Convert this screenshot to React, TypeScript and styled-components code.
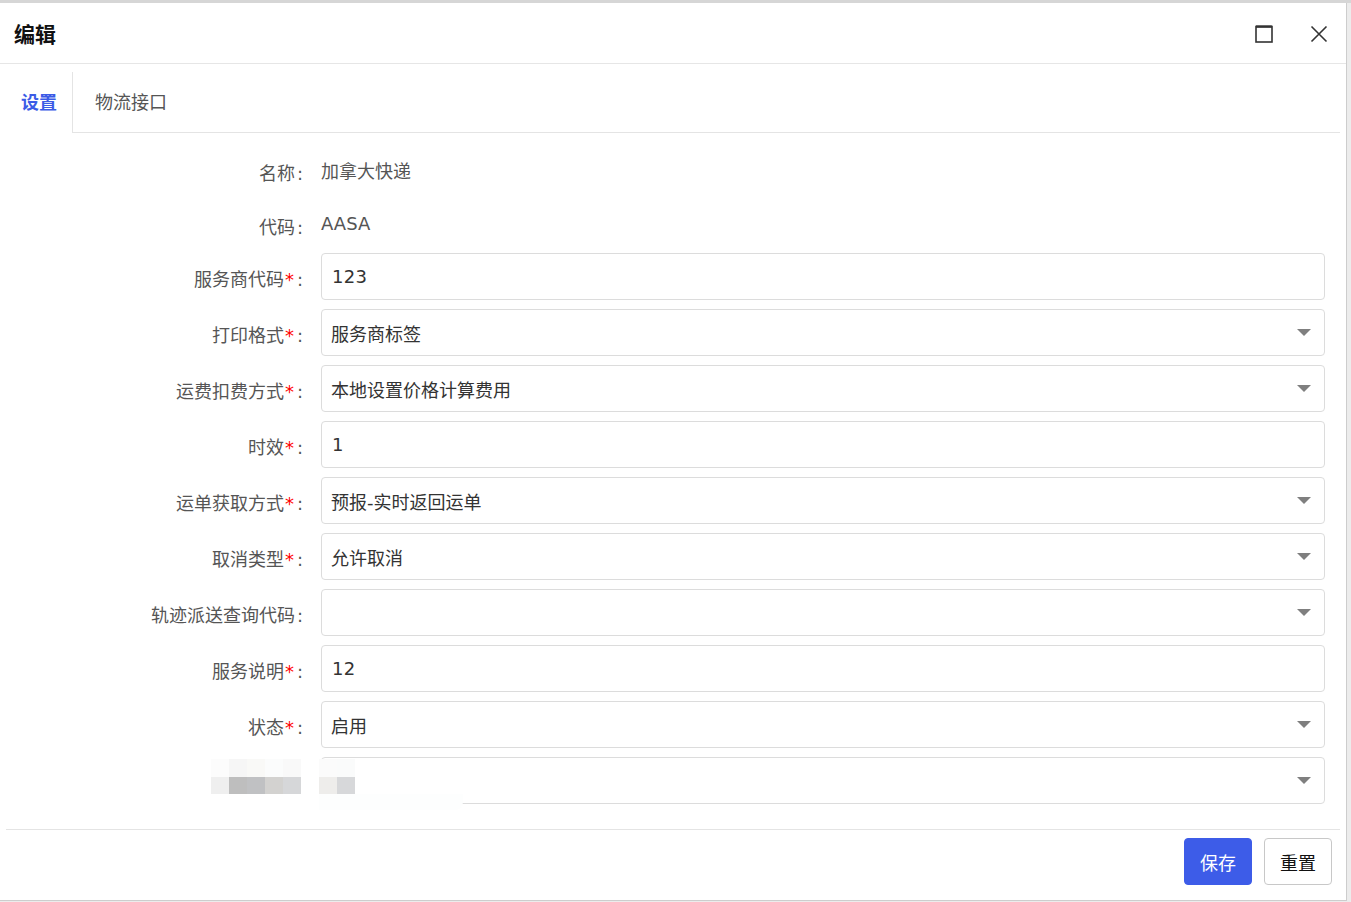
import React from 'react'
import styled, { createGlobalStyle } from 'styled-components'

const GlobalStyle = createGlobalStyle`
	html, body {
		margin: 0;
		padding: 0;
		background: #e4e4e4;
	}
	body {
		font-family: 'DejaVu Sans', 'Noto Sans CJK SC', sans-serif;
		color: #555;
	}
`

type Field = {
	label: string
	required?: boolean
	kind: 'text' | 'input' | 'select'
	value: string
}

const fields: Field[] = [
	{ label: '名称', kind: 'text', value: '加拿大快递' },
	{ label: '代码', kind: 'text', value: 'AASA' },
	{ label: '服务商代码', required: true, kind: 'input', value: '123' },
	{ label: '打印格式', required: true, kind: 'select', value: '服务商标签' },
	{ label: '运费扣费方式', required: true, kind: 'select', value: '本地设置价格计算费用' },
	{ label: '时效', required: true, kind: 'input', value: '1' },
	{ label: '运单获取方式', required: true, kind: 'select', value: '预报-实时返回运单' },
	{ label: '取消类型', required: true, kind: 'select', value: '允许取消' },
	{ label: '轨迹派送查询代码', kind: 'select', value: '' },
	{ label: '服务说明', required: true, kind: 'input', value: '12' },
	{ label: '状态', required: true, kind: 'select', value: '启用' },
]

const labelCells = ['#efefef', '#bebebe', '#c0c1c3', '#d3d2d0', '#d6d7d9']
const labelTopCells = ['#fcfcfc', '#f6f6f6', '#f9f9f7', '#fbfcfc', '#f9f9f9']
const valueCells = ['#eeedeb', '#d7d8da']
const valueTopCells = ['#fbfbfb', '#fafbfb']

export default function App() {
	return (
		<>
			<GlobalStyle />
			<Page>
				<Dialog>
					<Header>
						<Title>编辑</Title>
						<HeaderTools>
							<ToolButton title="最大化">
								<svg width="18" height="18" viewBox="0 0 18 18">
									<rect x="1" y="1.5" width="16" height="15.5" fill="none" stroke="#333" strokeWidth="1.6" />
									<line x1="1" y1="1.6" x2="17" y2="1.6" stroke="#333" strokeWidth="2.4" />
								</svg>
							</ToolButton>
							<ToolButton title="关闭">
								<svg width="18" height="18" viewBox="0 0 18 18">
									<path d="M1.5 1.5 L16.5 16.5 M16.5 1.5 L1.5 16.5" stroke="#333" strokeWidth="1.6" fill="none" />
								</svg>
							</ToolButton>
						</HeaderTools>
					</Header>
					<Body>
						<TabBar>
							<Tab $active>设置</Tab>
							<Tab>物流接口</Tab>
							<TabFill />
						</TabBar>
						<Form>
							{fields.map((f) => (
								<Row key={f.label} $static={f.kind === 'text'}>
									<Label>
										{f.label}
										{f.required && <Star>*</Star>}
										<Colon>:</Colon>
									</Label>
									{f.kind === 'text' ? (
										<StaticValue>{f.value}</StaticValue>
									) : (
										<Control>
											<ControlText $latin={f.kind === 'input'}>{f.value}</ControlText>
											{f.kind === 'select' && <Caret />}
										</Control>
									)}
								</Row>
							))}
							<Row>
								<Label />
								<Control>
									<ControlText />
									<Caret />
								</Control>
								<Blur>
									<CellGroup $left={211}>
										<CellLine>
											{labelTopCells.map((c, i) => (
												<Cell key={i} style={{ background: c }} />
											))}
										</CellLine>
										<CellLine>
											{labelCells.map((c, i) => (
												<Cell key={i} style={{ background: c }} />
											))}
										</CellLine>
									</CellGroup>
									<CellGroup $left={319}>
										<CellLine>
											{valueTopCells.map((c, i) => (
												<Cell key={i} style={{ background: c }} />
											))}
										</CellLine>
										<CellLine>
											{valueCells.map((c, i) => (
												<Cell key={i} style={{ background: c }} />
											))}
										</CellLine>
										<CellTail />
									</CellGroup>
								</Blur>
							</Row>
						</Form>
					</Body>
					<Footer>
						<Button $primary>保存</Button>
						<Button>重置</Button>
					</Footer>
				</Dialog>
			</Page>
		</>
	)
}

const Page = styled.div`
	padding-top: 3px;
	width: 1351px;
	height: 902px;
	box-sizing: border-box;
	overflow: hidden;
	background: linear-gradient(#d6d6d6 0, #d6d6d6 3px, #ececec 3px);
`

const Dialog = styled.div`
	width: 1347px;
	height: 898px;
	box-sizing: border-box;
	background: #fff;
	border-right: 1px solid #cdcdcd;
	border-bottom: 1px solid #cdcdcd;
	display: flex;
	flex-direction: column;
`

const Header = styled.div`
	height: 60px;
	border-bottom: 1px solid #e6e6e6;
	display: flex;
	align-items: center;
	justify-content: space-between;
	padding: 0 18px 0 14px;
`

const Title = styled.div`
	font-family: 'Noto Sans CJK SC', sans-serif;
	font-size: 21px;
	font-weight: 700;
	color: #111;
`

const HeaderTools = styled.div`
	display: flex;
	align-items: center;
	gap: 37px;
	padding-top: 2px;
`

const ToolButton = styled.span`
	display: flex;
	width: 18px;
	height: 18px;
	cursor: pointer;
`

const Body = styled.div`
	padding-right: 6px;
`

const TabBar = styled.div`
	display: flex;
	padding-top: 8px;
	height: 61px;
`

const Tab = styled.div<{ $active?: boolean }>`
	display: flex;
	align-items: center;
	font-family: 'Noto Sans CJK SC', sans-serif;
	font-size: 18px;
	box-sizing: border-box;
	padding-bottom: 3px;
	${(p) =>
		p.$active
			? `
		width: 73px;
		padding-left: 21px;
		color: #3b5be6;
		font-weight: 700;
		border-right: 1px solid #e4e4e4;
	`
			: `
		padding-left: 22px;
		padding-right: 22px;
		color: #555;
		border-bottom: 1px solid #e4e4e4;
	`}
`

const TabFill = styled.div`
	flex: 1;
	border-bottom: 1px solid #e4e4e4;
`

const Form = styled.div`
	padding: 12px 15px 25px 0;
	display: flex;
	flex-direction: column;
`

const Row = styled.div<{ $static?: boolean }>`
	position: relative;
	display: flex;
	align-items: center;
	height: ${(p) => (p.$static ? 51 : 47)}px;
	margin-bottom: ${(p) => (p.$static ? 3 : 9)}px;
	&:last-child {
		margin-bottom: 0;
	}
`

const Label = styled.div`
	width: 303px;
	flex-shrink: 0;
	margin-right: 18px;
	text-align: right;
	font-size: 18px;
	color: #555;
	white-space: nowrap;
	padding-top: 2px;
`

const Star = styled.span`
	color: #f00;
	padding: 0 1px;
`

const Colon = styled.span`
	padding-left: 2px;
`

const StaticValue = styled.div`
	font-size: 18px;
	color: #555;
	margin-top: -2px;
`

const Control = styled.div`
	flex: 1;
	height: 47px;
	box-sizing: border-box;
	border: 1px solid #dcdcdc;
	border-radius: 4px;
	display: flex;
	align-items: center;
	padding: 0 13px 0 9px;
	background: #fff;
`

const ControlText = styled.div<{ $latin?: boolean }>`
	flex: 1;
	font-size: 18px;
	color: #333;
	padding-left: ${(p) => (p.$latin ? 1 : 0)}px;
	letter-spacing: ${(p) => (p.$latin ? '0.3px' : '0')};
`

const Caret = styled.span`
	width: 0;
	height: 0;
	border-left: 7px solid transparent;
	border-right: 7px solid transparent;
	border-top: 7px solid #7f7f7f;
`

const Blur = styled.div`
	position: absolute;
	left: 0;
	top: 0;
	right: 0;
	bottom: 0;
	pointer-events: none;
`

const CellGroup = styled.div<{ $left: number }>`
	position: absolute;
	left: ${(p) => p.$left}px;
	top: 2px;
	display: flex;
	flex-direction: column;
`

const CellLine = styled.div`
	display: flex;
`

const Cell = styled.div`
	width: 18px;
	height: 17.5px;
`

const CellTail = styled.div`
	width: 144px;
	height: 16px;
	background: #fdfefe;
	border-radius: 0 0 8px 0;
`

const Footer = styled.div`
	margin: 0 6px;
	border-top: 1px solid #e4e4e4;
	padding: 8px 8px 0 0;
	display: flex;
	justify-content: flex-end;
	gap: 12px;
`

const Button = styled.button<{ $primary?: boolean }>`
	width: 68px;
	height: 47px;
	border-radius: 4px;
	font-family: 'Noto Sans CJK SC', sans-serif;
	font-size: 18px;
	cursor: pointer;
	padding: 0;
	border: 1px solid ${(p) => (p.$primary ? '#3d5ce8' : '#c8c8c8')};
	background: ${(p) => (p.$primary ? '#3d5ce8' : '#fff')};
	color: ${(p) => (p.$primary ? '#fff' : '#111')};
`
